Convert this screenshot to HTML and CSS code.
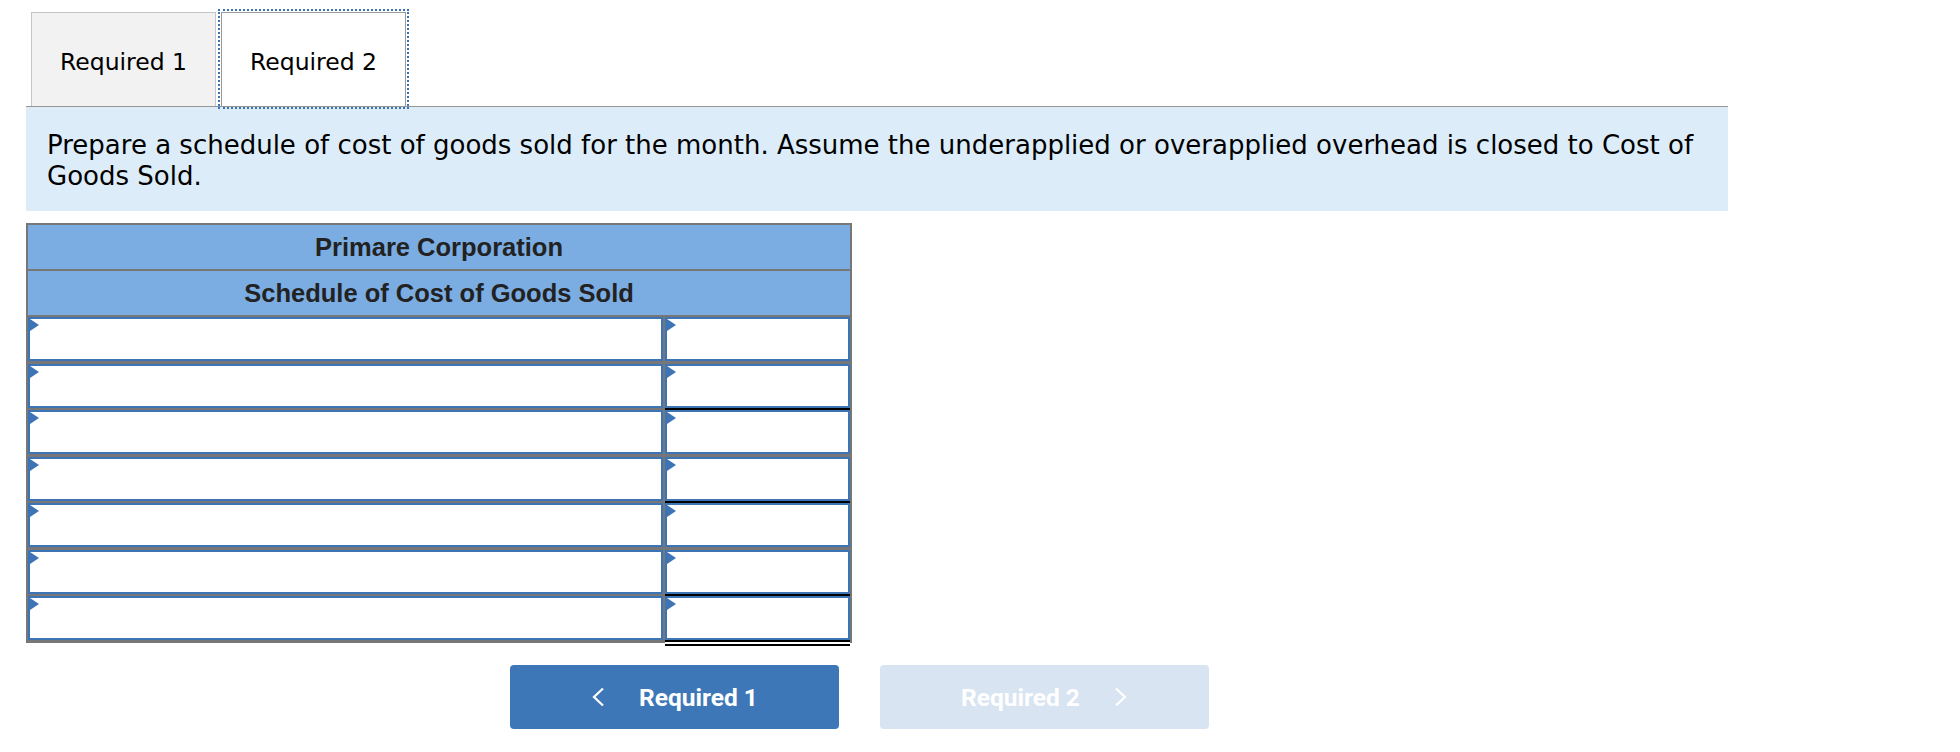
FILE: index.html
```html
<!DOCTYPE html>
<html>
<head>
<meta charset="utf-8">
<link rel="stylesheet" href="styles.css">
</head>
<body>
<div class="page">
  <div class="tabs">
    <div class="tab">Required 1</div>
    <div class="tab active">Required 2</div>
  </div>
  <div class="prompt">Prepare a schedule of cost of goods sold for the month. Assume the underapplied or overapplied overhead is closed to Cost of Goods Sold.</div>
  <div class="sheet">
    <div class="sheet-title">Primare Corporation</div>
    <div class="sheet-title">Schedule of Cost of Goods Sold</div>
    <div class="sheet-body">
      <div class="cell"></div><div class="cell"></div>
      <div class="cell"></div><div class="cell under"></div>
      <div class="cell"></div><div class="cell"></div>
      <div class="cell"></div><div class="cell under"></div>
      <div class="cell"></div><div class="cell"></div>
      <div class="cell"></div><div class="cell under"></div>
      <div class="cell"></div><div class="cell double"></div>
    </div>
  </div>
  <div class="nav">
    <div class="btn prev">
      <svg class="chev" width="14" height="20" viewBox="0 0 14 20"><polyline points="12,1.5 3,10 12,18.5" fill="none" stroke="#fff" stroke-width="2.2"/></svg>
      <span>Required 1</span>
    </div>
    <div class="btn next">
      <span>Required 2</span>
      <svg class="chev" width="14" height="20" viewBox="0 0 14 20"><polyline points="2,1.5 11,10 2,18.5" fill="none" stroke="#fff" stroke-width="2.2"/></svg>
    </div>
  </div>
</div>
</body>
</html>
```
FILE: styles.css
```css
html, body {
  margin: 0;
  padding: 0;
  background: #fff;
}
body {
  font-family: "DejaVu Sans", Verdana, sans-serif;
  color: #000;
}
.page {
  padding-left: 26px;
  width: 1702px;
}
.tabs {
  display: flex;
  gap: 5px;
  padding-left: 5px;
  padding-top: 12px;
  border-bottom: 1.5px solid #969696;
}
.tab {
  box-sizing: border-box;
  width: 185px;
  height: 94px;
  padding-top: 5px;
  border: 1.5px solid #c6c6c6;
  border-bottom: none;
  background: #f2f2f2;
  display: flex;
  align-items: center;
  justify-content: center;
  font-size: 23.5px;
}
.tab.active {
  background: #fff;
  border-color: #999;
  outline: 2.5px dotted #3a72b6;
  outline-offset: 1.5px;
}
.prompt {
  background: #dcecf8;
  padding: 23px 21px 19px 21px;
  font-size: 26px;
  line-height: 31px;
}
.sheet {
  margin-top: 12px;
  box-sizing: border-box;
  width: 826px;
  border: 2px solid #777;
  background: #777;
}
.sheet-title {
  height: 44px;
  background: #7bade2;
  display: flex;
  align-items: center;
  justify-content: center;
  font-family: "Liberation Sans", Arial, sans-serif;
  font-weight: bold;
  font-size: 25.5px;
  color: #222;
}
.sheet-title + .sheet-title {
  margin-top: 2px;
}
.sheet-body {
  display: grid;
  grid-template-columns: 635px 185px;
  column-gap: 2px;
  row-gap: 2.5px;
  padding-top: 2px;
  padding-bottom: 1px;
}
.cell {
  position: relative;
  box-sizing: border-box;
  height: 44px;
  background: #fff;
  border: 2px solid #3d74b6;
}
.cell::before {
  content: "";
  position: absolute;
  left: 0;
  top: 0;
  border-left: 9px solid #3d74b6;
  border-top: 6.5px solid transparent;
  border-bottom: 6.5px solid transparent;
}
.cell.under {
  box-shadow: 0 2px 0 #000;
}
.cell.double {
  box-shadow: 0 2px 0 #000, 0 4px 0 #fff, 0 6px 0 #000;
}
.nav {
  display: flex;
  gap: 41px;
  margin-top: 22px;
  margin-left: 484px;
}
.btn {
  box-sizing: border-box;
  width: 329px;
  height: 64px;
  border-radius: 4px;
  display: flex;
  align-items: center;
  justify-content: center;
  gap: 34px;
  font-family: Roboto, "Liberation Sans", sans-serif;
  font-weight: bold;
  font-size: 24.5px;
  color: #fff;
}
.btn.prev {
  background: #3d77b8;
}
.btn.next {
  background: #d8e4f2;
}
.chev {
  display: block;
}
```
